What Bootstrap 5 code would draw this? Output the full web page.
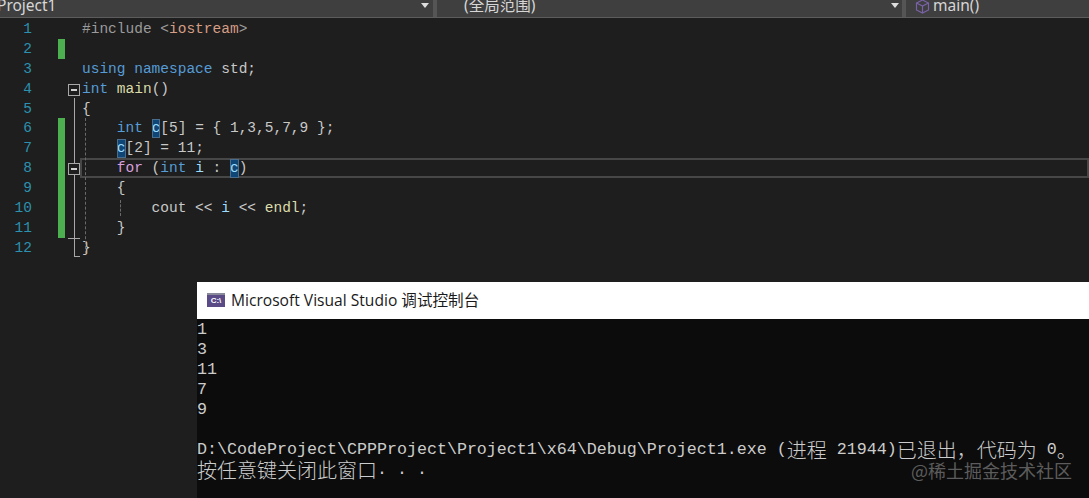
<!DOCTYPE html>
<html lang="zh">
<head>
<meta charset="utf-8">
<title>Project1</title>
<link href="https://cdn.jsdelivr.net/npm/bootstrap@5.3.0/dist/css/bootstrap.min.css" rel="stylesheet">
<style>
html,body{height:498px;overflow:hidden;background:#1e1e1e}
.topbar{height:18px;background:#3f3f3f;border-bottom:1px solid #5c5c5c;color:#d6d6d6;font:15.5px/11px "Noto Sans","Noto Sans CJK SC",sans-serif;overflow:hidden}
.seg{height:17px;position:relative;white-space:nowrap}
.seg-a{width:437px;margin-left:-3px}
.seg-b{width:473px;padding-left:27px;border-left:4px solid #555;border-right:4px solid #555;margin-left:-1px}
.seg-c{flex:1;padding-left:9px}
.caret-w{position:absolute;top:3px;width:0;height:0;border-left:4px solid transparent;border-right:4px solid transparent;border-top:5px solid #dedede}
.seg-a .caret-w{right:5px}
.seg-b .caret-w{right:3px}
.cube{width:15px;height:15px;margin-right:3px;vertical-align:top;margin-top:-1px}
.editor{height:264px;padding-top:1px;font:14.5px/19.9px "Liberation Mono",monospace;color:#c8c8c8;position:relative}
.ln{height:19.9px}
.num{width:32px;padding-top:1px;text-align:right;color:#2b91af;flex:none}
.chg{width:7px;margin-left:26px;margin-right:3px;flex:none}
.chg-on{background:#4caf50}
.fold{width:12px;flex:none;position:relative}
.fold-line::before{content:"";position:absolute;left:6px;top:-1px;bottom:-1px;width:1px;background:#a8a8a8}
.fold-end::before{bottom:1px}
.fold-end::after{content:"";position:absolute;left:6px;right:0;bottom:1px;height:1px;background:#a8a8a8}
.fold-top{border-top:1px solid #a8a8a8}
.fold-box{position:absolute;left:0;top:5px;width:12px;height:12px;background:#1e1e1e;border:1px solid #a8a8a8;z-index:1}
.fold-box::after{content:"";position:absolute;left:2px;right:2px;top:4px;height:2px;background:#d0d0d0}
.code{flex:1;padding-left:2px;padding-top:1px;white-space:pre}
.cur{box-shadow:inset 0 0 0 2px #474747}
.kw{color:#569cd6}.str{color:#d69d85}.pp{color:#9b9b9b}.fn{color:#dcdcaa}.var-c{color:#9cdcfe}.ctl{color:#d8a0df}
.hit{background:#0e4677;outline:1px solid #4a6d8c;outline-offset:-1px;color:#9cdcfe;display:inline-block;line-height:19px}
.guide{position:absolute;width:0;border-left:1px dashed #6a6a6a}
.g1{left:85px;top:100px;height:136px}
.g2{left:120px;top:182px;height:16px}
.console{margin-left:197px;height:216px;background:#0c0c0c;position:relative}
.contitle{height:37px;padding-bottom:2px;background:#fff;color:#1a1a1a;font:15.6px "Open Sans","Noto Sans CJK SC",sans-serif}
.conicon{width:18px;height:14px;background:#5a4a86;border-top:2px solid #8a8a9a;color:#fff;font:bold 8px/12px "Liberation Sans",sans-serif;text-align:center;margin-left:10px;margin-right:6px;flex:none}
.conbody{padding-top:1px;font:16.67px/20px "Liberation Mono",monospace;color:#cccccc;white-space:pre}
.conbody>div{height:20px}
.zh{font:300 20px/20px "Noto Sans CJK SC",sans-serif;display:inline-block;height:20px;vertical-align:top}
.mark-w{position:absolute;left:714px;top:178px;font:18px/20px "Noto Sans CJK SC",sans-serif;color:#5c5c5c;white-space:nowrap}
</style>
</head>
<body class="m-0">
<div class="topbar d-flex">
  <div class="seg seg-a">Project1<span class="caret-w"></span></div>
  <div class="seg seg-b">(全局范围)<span class="caret-w"></span></div>
  <div class="seg seg-c"><svg class="cube" viewBox="0 0 15 15" fill="none" stroke="#7a62a8" stroke-width="1.2"><path d="M7.5 1 13.5 4v7l-6 3-6-3V4z"/><path d="M1.5 4l6 3 6-3M7.5 7v7"/></svg>main()</div>
</div>
<div class="editor">
  <div class="guide g1"></div><div class="guide g2"></div>
  <div class="ln d-flex"><div class="num">1</div><div class="chg"></div><div class="fold"></div><div class="code"><span class="pp">#include &lt;</span><span class="str">iostream</span><span class="pp">&gt;</span></div></div>
  <div class="ln d-flex"><div class="num">2</div><div class="chg chg-on"></div><div class="fold"></div><div class="code"></div></div>
  <div class="ln d-flex"><div class="num">3</div><div class="chg"></div><div class="fold"></div><div class="code"><span class="kw">using namespace</span> std;</div></div>
  <div class="ln d-flex"><div class="num">4</div><div class="chg"></div><div class="fold"><span class="fold-box"></span></div><div class="code"><span class="kw">int</span> <span class="fn">main</span>()</div></div>
  <div class="ln d-flex"><div class="num">5</div><div class="chg"></div><div class="fold fold-line"></div><div class="code">{</div></div>
  <div class="ln d-flex"><div class="num">6</div><div class="chg chg-on"></div><div class="fold fold-line"></div><div class="code">    <span class="kw">int</span> <span class="hit">c</span>[5] = { 1,3,5,7,9 };</div></div>
  <div class="ln d-flex"><div class="num">7</div><div class="chg chg-on"></div><div class="fold fold-line"></div><div class="code">    <span class="hit">c</span>[2] = 11;</div></div>
  <div class="ln d-flex"><div class="num">8</div><div class="chg chg-on"></div><div class="fold fold-line"><span class="fold-box"></span></div><div class="code cur">    <span class="ctl">for</span> (<span class="kw">int</span> <span class="var-c">i</span> : <span class="hit">c</span>)</div></div>
  <div class="ln d-flex"><div class="num">9</div><div class="chg chg-on"></div><div class="fold fold-line"></div><div class="code">    {</div></div>
  <div class="ln d-flex"><div class="num">10</div><div class="chg chg-on"></div><div class="fold fold-line"></div><div class="code">        cout &lt;&lt; <span class="var-c">i</span> &lt;&lt; <span class="fn">endl</span>;</div></div>
  <div class="ln d-flex"><div class="num">11</div><div class="chg chg-on"></div><div class="fold fold-line"></div><div class="code">    }</div></div>
  <div class="ln d-flex"><div class="num">12</div><div class="chg"></div><div class="fold fold-line fold-top fold-end"></div><div class="code">}</div></div>
</div>
<div class="console">
  <div class="contitle d-flex align-items-center"><div class="conicon">C:\</div><span>Microsoft Visual Studio 调试控制台</span></div>
  <div class="conbody"><div>1</div><div>3</div><div>11</div><div>7</div><div>9</div><div>&nbsp;</div><div>D:\CodeProject\CPPProject\Project1\x64\Debug\Project1.exe (<span class="zh">进程</span> 21944)<span class="zh">已退出，代码为</span> 0<span class="zh">。</span></div><div><span class="zh">按任意键关闭此窗口</span>. . .</div></div>
  <div class="mark-w">@稀土掘金技术社区</div>
</div>
<script src="https://cdn.jsdelivr.net/npm/bootstrap@5.3.0/dist/js/bootstrap.bundle.min.js"></script>
</body>
</html>
